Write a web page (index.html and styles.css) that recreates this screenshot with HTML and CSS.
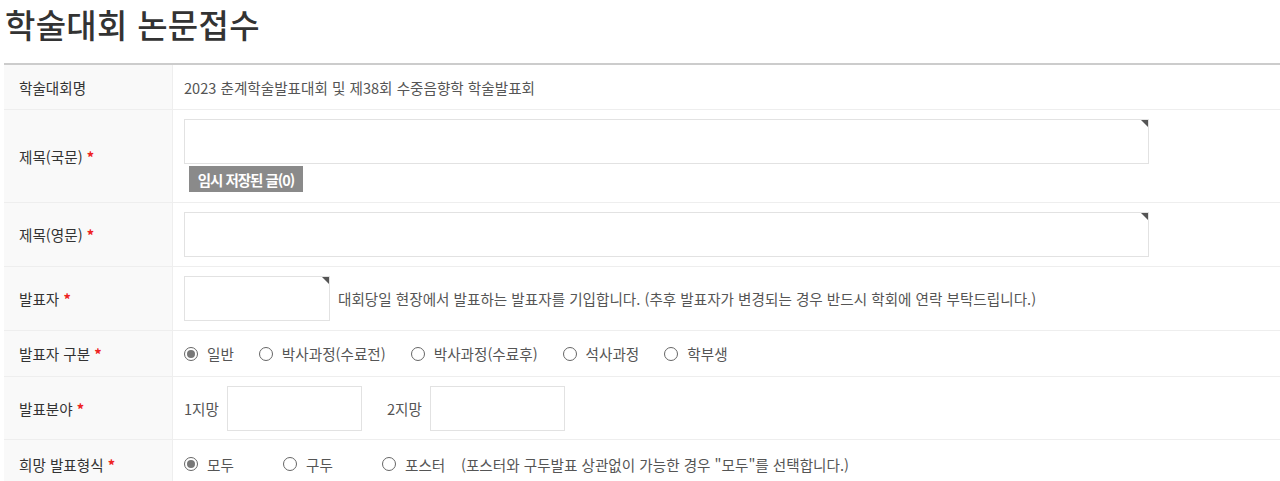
FILE: index.html
```html
<!DOCTYPE html>
<html lang="ko">
<head>
    <meta charset="UTF-8">
    <meta name="viewport" content="width=device-width, initial-scale=1.0">
    <title>학술대회 논문접수</title>
    <link rel="stylesheet" href="styles.css">
</head>
<body>
    <div class="page">
        <h1 class="page-title">학술대회 논문접수</h1>
        <table class="form-table">
            <tr class="row-name">
                <th>학술대회명</th>
                <td>2023 춘계학술발표대회 및 제38회 수중음향학 학술발표회</td>
            </tr>
            <tr class="row-title-ko">
                <th>제목(국문) <span class="req">*</span></th>
                <td>
                    <span class="field field-wide"><textarea></textarea></span>
                    <div class="saved"><button type="button" class="btn-saved">임시 저장된 글(0)</button></div>
                </td>
            </tr>
            <tr class="row-title-en">
                <th>제목(영문) <span class="req">*</span></th>
                <td><span class="field field-wide"><textarea></textarea></span></td>
            </tr>
            <tr class="row-speaker">
                <th>발표자 <span class="req">*</span></th>
                <td>
                    <div class="inline">
                        <span class="field field-small"><textarea></textarea></span>
                        <span class="hint">대회당일 현장에서 발표하는 발표자를 기입합니다. (추후 발표자가 변경되는 경우 반드시 학회에 연락 부탁드립니다.)</span>
                    </div>
                </td>
            </tr>
            <tr class="row-type">
                <th>발표자 구분 <span class="req">*</span></th>
                <td>
                    <div class="radios">
                        <label><input type="radio" name="kind" checked> 일반</label>
                        <label><input type="radio" name="kind"> 박사과정(수료전)</label>
                        <label><input type="radio" name="kind"> 박사과정(수료후)</label>
                        <label><input type="radio" name="kind"> 석사과정</label>
                        <label><input type="radio" name="kind"> 학부생</label>
                    </div>
                </td>
            </tr>
            <tr class="row-field">
                <th>발표분야 <span class="req">*</span></th>
                <td>
                    <div class="inline">
                        <span>1지망</span><input type="text" class="pick">
                        <span class="second">2지망</span><input type="text" class="pick">
                    </div>
                </td>
            </tr>
            <tr class="row-form">
                <th>희망 발표형식 <span class="req">*</span></th>
                <td>
                    <div class="radios radios-fixed">
                        <label><input type="radio" name="form" checked> 모두</label>
                        <label><input type="radio" name="form"> 구두</label>
                        <label><input type="radio" name="form"> 포스터</label>
                        <span class="note">(포스터와 구두발표 상관없이 가능한 경우 "모두"를 선택합니다.)</span>
                    </div>
                </td>
            </tr>
        </table>
    </div>
</body>
</html>
```

FILE: styles.css
```css
body {
    margin: 0;
    background: #fff;
    font-family: "Noto Sans CJK KR", "Noto Sans", sans-serif;
    color: #555;
}

.page {
    padding-left: 4px;
}

.page-title {
    margin: 0;
    padding-left: 1px;
    height: 63px;
    line-height: 48px;
    font-size: 33px;
    font-weight: 500;
    color: #333;
    letter-spacing: 0.3px;
}

.form-table {
    width: 100%;
    border-collapse: collapse;
    border-top: 2px solid #ccc;
    font-size: 14.6px;
}

.form-table th,
.form-table td {
    border-bottom: 1px solid #eee;
    padding: 0 0 0 11px;
    text-align: left;
    vertical-align: middle;
}

.form-table th {
    width: 153px;
    padding-left: 15px;
    background: #f9f9f9;
    border-right: 1px solid #eee;
    font-weight: normal;
    color: #333;
}

.req {
    color: #e22;
    font-weight: bold;
}

.row-name th, .row-name td { height: 44px; }
.row-title-ko th { height: 92px; }
.row-title-ko td { height: 83px; }
.row-title-en th, .row-title-en td { height: 63px; }
.row-speaker th, .row-speaker td { height: 63px; }
.row-type th, .row-type td { height: 45px; }
.row-field th, .row-field td { height: 62px; }
.row-form th, .row-form td { height: 48px; }

.row-title-ko td {
    vertical-align: top;
    padding-top: 9px;
}

.field {
    position: relative;
    display: inline-block;
    vertical-align: middle;
}

.field::after {
    content: "";
    position: absolute;
    top: 1px;
    right: 1px;
    border-style: solid;
    border-width: 0 7px 7px 0;
    border-color: transparent #555 transparent transparent;
}

.field textarea {
    display: block;
    box-sizing: border-box;
    height: 45px;
    border: 1px solid #e2e2e2;
    resize: none;
    margin: 0;
    font: inherit;
}

.field-wide { display: block; width: 965px; }
.field-wide textarea { width: 965px; }
.field-small textarea { width: 146px; }

.saved {
    display: flex;
    padding: 2px 0 0 5px;
}

.btn-saved {
    height: 26px;
    width: 114px;
    border: 0;
    background: #8a8a8a;
    color: #fff;
    font-family: inherit;
    font-size: 14.5px;
    font-weight: bold;
    letter-spacing: -1px;
    padding: 0;
}

.inline {
    display: flex;
    align-items: center;
}

.hint {
    margin-left: 8px;
}

.pick {
    box-sizing: border-box;
    width: 135px;
    height: 45px;
    border: 1px solid #e2e2e2;
    margin: 0 0 0 8px;
}

.second {
    margin-left: 25px;
}

.radios {
    display: flex;
    align-items: center;
    gap: 25px;
}

.radios label {
    display: flex;
    align-items: center;
    gap: 9px;
}

.radios-fixed {
    gap: 0;
}

.radios-fixed label {
    width: 99px;
}

.note {
    margin-left: -20px;
}

.radios input {
    appearance: none;
    -webkit-appearance: none;
    margin: 0;
    width: 14px;
    height: 14px;
    border: 1px solid #666;
    border-radius: 50%;
    box-sizing: border-box;
    position: relative;
}

.radios input:checked::after {
    content: "";
    position: absolute;
    left: 2px;
    top: 2px;
    width: 8px;
    height: 8px;
    border-radius: 50%;
    background: #777;
}
```
